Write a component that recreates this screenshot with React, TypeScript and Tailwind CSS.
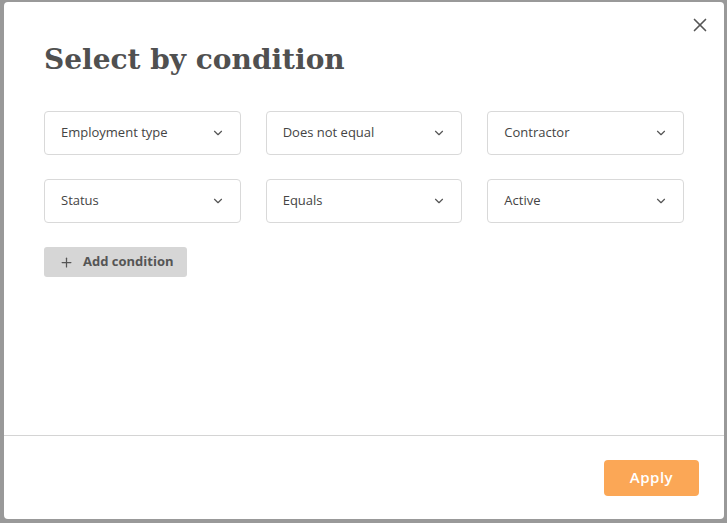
import { ChevronDown, Plus, X } from 'lucide-react'

const rows = [
  ['Employment type', 'Does not equal', 'Contractor'],
  ['Status', 'Equals', 'Active'],
]

function Select({ label }: { label: string }) {
  return (
    <button className="h-[44px] w-full rounded-[4px] border border-[#d9d9d9] bg-white pl-4 pr-[15px] flex items-center justify-between text-[13px] text-[#444]">
      <span>{label}</span>
      <ChevronDown className="w-[14px] h-[14px] text-[#555]" strokeWidth={2} />
    </button>
  )
}

export default function App() {
  return (
    <div className="h-[523px] w-[727px] bg-[#999] pt-[2px] pl-[4px] pr-[3px] pb-[4px]" style={{ fontFamily: '"Open Sans", "Noto Sans", sans-serif' }}>
      <div className="relative h-full w-full rounded-[4px] bg-white flex flex-col">
        <button className="absolute right-[13px] top-[12px] text-[#555]" aria-label="Close">
          <X className="w-[22px] h-[22px]" strokeWidth={1.8} />
        </button>

        <div className="flex-1 px-[40px] pt-[40px]">
          <h1
            className="text-[28px] font-bold text-[#505050] leading-[36px]"
            style={{ fontFamily: '"DejaVu Serif", serif' }}
          >
            Select by condition
          </h1>

          <div className="mt-[33px] flex flex-col gap-[24px]">
            {rows.map((r, i) => (
              <div key={i} className="grid grid-cols-3 gap-[25px]">
                {r.map((c) => (
                  <Select key={c} label={c} />
                ))}
              </div>
            ))}
          </div>

          <button className="mt-[24px] h-[30px] pl-[15px] pr-[14px] rounded-[3px] bg-[#d6d6d6] flex items-center gap-[9px] text-[13px] font-bold text-[#555]">
            <Plus className="w-[15px] h-[15px]" strokeWidth={2} />
            Add condition
          </button>
        </div>

        <div className="h-[84px] border-t border-[#d4d4d4] flex items-center justify-end pr-[25px]">
          <button className="h-[36px] w-[95px] rounded-[4px] bg-[#fba756] text-white text-[15px] font-semibold tracking-[0.5px]">
            Apply
          </button>
        </div>
      </div>
    </div>
  )
}
